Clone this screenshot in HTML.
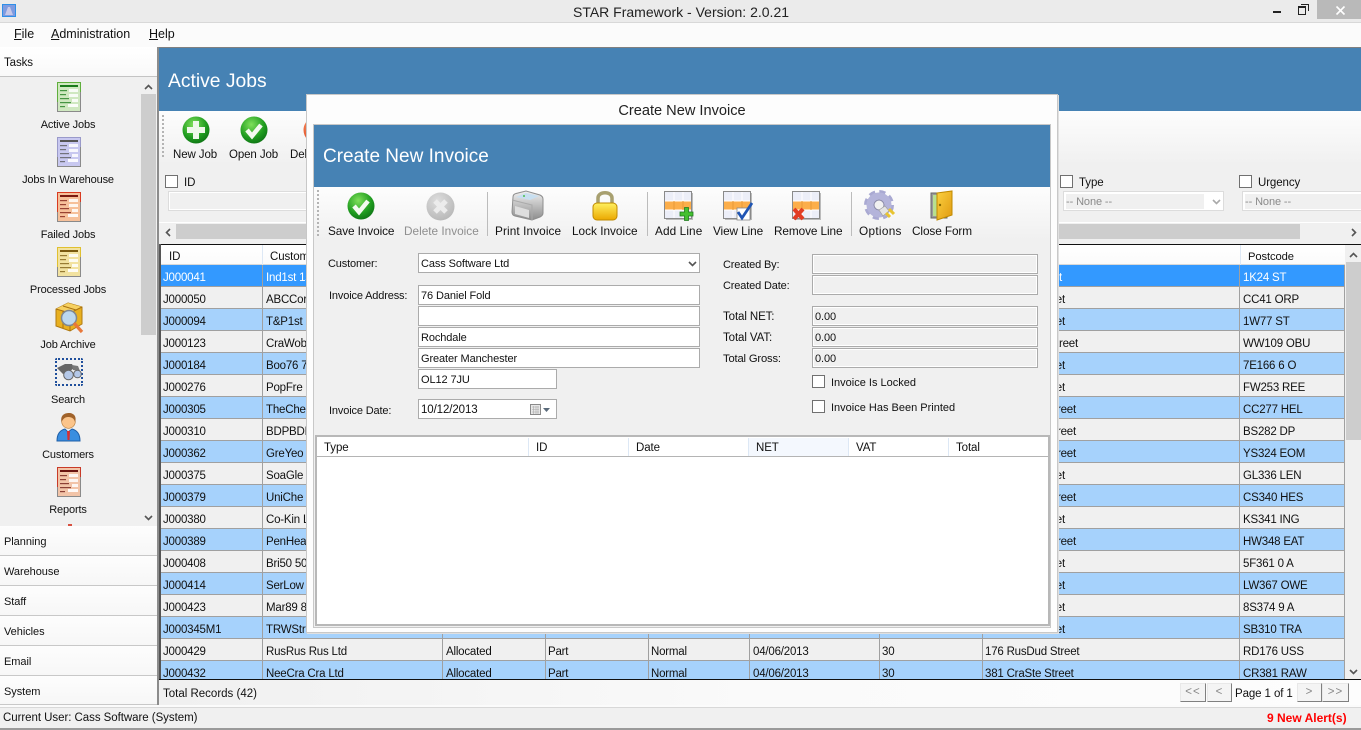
<!DOCTYPE html>
<html><head><meta charset="utf-8"><title>STAR Framework</title>
<style>
html,body{margin:0;padding:0;width:1361px;height:730px;overflow:hidden;background:#f0f0f0}
body{position:relative;font:11.5px/14px "Liberation Sans",sans-serif;color:#111;letter-spacing:-.1px}
.a{position:absolute}
.t{position:absolute;white-space:nowrap;margin-top:1px}
.c{position:absolute;white-space:nowrap;transform:translateX(-50%);margin-top:1px}
.s{font-size:11px;letter-spacing:-.15px}
.l{font-size:11px;letter-spacing:-.15px}
.tb{font-size:11.8px;letter-spacing:-.1px}
u{text-decoration:underline}
.in{position:absolute;box-sizing:border-box;border:1px solid #ababab;background:#fff;padding:3px 2px 0;height:21px;white-space:nowrap;font-size:11px;letter-spacing:-.1px}
.ro{background:#f0f0f0;box-shadow:inset 0 0 0 1px #fff}
.cb{position:absolute;box-sizing:border-box;width:13px;height:13px;border:1px solid #707070;background:#fff}
.acc{position:absolute;left:0;width:157px;height:30px;box-sizing:border-box;background:linear-gradient(#fdfdfd,#f7f7f7);border-bottom:1px solid #c8c8c8;padding:9px 0 0 4px;font-size:11px;letter-spacing:-.05px}
table{border-collapse:separate;border-spacing:0;table-layout:fixed;width:1184px;letter-spacing:-.2px}
td{height:16px;padding:5px 0 0 2px;box-sizing:content-box;border-right:1px solid #a0a0a0;border-bottom:1px solid #a0a0a0;white-space:nowrap;overflow:hidden;line-height:16px}
td:nth-child(2),td:nth-child(3),td:nth-child(6),td:nth-child(9){padding-left:3px}
tr.o td{background:#a6d2fc}
tr.e td{background:#f0f0f0}
tr.s2 td{background:#3399ff;color:#fff}
.r1,.r2,.r3,.r4{text-align:right}
td.r1{padding-right:177px}td.r2{padding-right:174px}td.r3{padding-right:163px}td.r4{padding-right:161px}
.btn{position:absolute;box-sizing:border-box;top:683px;height:19px;background:#f4f4f4;border:1px solid;border-color:#e8e8e8 #808080 #808080 #e8e8e8;text-align:center;color:#888;line-height:16px;letter-spacing:1px}
.sep{position:absolute;width:1px;background:#bcbcbc}
.grip{position:absolute;width:2px;border-left:2px dotted #b4b4b4}
svg{position:absolute;overflow:visible}
</style></head><body>
<svg width="0" height="0" style="position:absolute">
<defs>
<radialGradient id="gg" cx=".4" cy=".3" r=".8"><stop offset="0" stop-color="#7fe05a"/><stop offset=".6" stop-color="#1f9c1f"/><stop offset="1" stop-color="#0a6a12"/></radialGradient>
<radialGradient id="gr" cx=".4" cy=".3" r=".8"><stop offset="0" stop-color="#dedede"/><stop offset="1" stop-color="#b4b4b4"/></radialGradient>
<radialGradient id="rd" cx=".4" cy=".3" r=".8"><stop offset="0" stop-color="#ffa070"/><stop offset="1" stop-color="#d83a14"/></radialGradient>
<linearGradient id="go" x1="0" y1="0" x2="0" y2="1"><stop offset="0" stop-color="#fff060"/><stop offset="1" stop-color="#eba800"/></linearGradient>
<linearGradient id="dr" x1="0" y1="0" x2="1" y2="1"><stop offset="0" stop-color="#fbd040"/><stop offset="1" stop-color="#e09a10"/></linearGradient>
<linearGradient id="pr" x1="0" y1="0" x2="0" y2="1"><stop offset="0" stop-color="#f0f0f0"/><stop offset="1" stop-color="#8c8c8c"/></linearGradient>
<symbol id="doc" viewBox="0 0 24 30"><rect x=".5" y=".5" width="23" height="29" fill="var(--bg)" stroke="var(--bd)"/><path d="M23.500 10V29.500H.5V20" stroke="#8a8a8a" fill="none"/><rect x="3" y="3" width="18" height="2" fill="var(--dk)"/><rect x="12" y="7" width="9" height="3" fill="#fff" opacity=".85"/><rect x="12" y="12" width="9" height="3" fill="#fff" opacity=".85"/><rect x="15" y="17" width="6" height="3" fill="#fff" opacity=".85"/><rect x="11" y="22" width="10" height="3" fill="#fff" opacity=".9"/><rect x="3" y="8" width="7" height="1.2" fill="var(--dk)" opacity=".75"/><rect x="3" y="12" width="6" height="1.2" fill="var(--dk)" opacity=".75"/><rect x="3" y="16" width="9" height="1.2" fill="var(--dk)" opacity=".75"/><rect x="3" y="20" width="11" height="1.2" fill="var(--dk)" opacity=".75"/><rect x="3" y="24" width="5" height="1.2" fill="var(--dk)" opacity=".75"/></symbol>
<symbol id="gridic" viewBox="0 0 30 30"><rect x=".5" y=".5" width="27" height="27" fill="#eceef8" stroke="#8a8a8a"/><rect x="1" y="10" width="26" height="9" fill="#fcae4a"/><path d="M10 1V10M19 1V10M10 19V27M19 19V27M1 10H27M1 19H27" stroke="#fff" fill="none"/><path d="M10 10V19M19 10V19" stroke="#e89a38" fill="none"/><path d="M28.500 2V28.500H2" stroke="#bbb" fill="none"/></symbol>
</defs></svg>

<!-- title bar -->
<div class="a" style="left:0;top:0;width:1361px;height:23px;background:#ebebeb;border-bottom:1px solid #d8d8d8;box-sizing:border-box"></div>
<svg style="left:2px;top:4px" width="14" height="13" viewBox="0 0 14 13"><rect x=".5" y=".5" width="13" height="12" fill="#7f9be0" stroke="#2f8fe8"/><path d="M3 11L6 3H8L11 11Z" fill="#c8c8e8"/></svg>
<div class="c" style="left:681px;top:4px;font-size:14px;letter-spacing:0;color:#222">STAR Framework - Version: 2.0.21</div>
<div class="a" style="left:1273px;top:11px;width:8px;height:2px;background:#222"></div>
<div class="a" style="left:1298px;top:6px;width:6px;height:6px;border:1px solid #222;border-top-width:2px"></div>
<div class="a" style="left:1301px;top:4px;width:7px;height:6px;border:1px solid #222;border-bottom:0;border-left:0"></div>
<div class="a" style="left:1317px;top:0;width:44px;height:19px;background:#b9b9b9"></div>
<svg style="left:1336px;top:6px" width="9" height="9"><path d="M.5 .5L8.500 8.500M8.500 .5L.5 8.500" stroke="#fff" stroke-width="1.600"/></svg>

<!-- menu -->
<div class="a" style="left:0;top:23px;width:1361px;height:24px;background:#fbfbfb"></div>
<div class="t" style="left:14px;top:26px;font-size:12.5px;letter-spacing:0"><u>F</u>ile</div>
<div class="t" style="left:51px;top:26px;font-size:12.5px;letter-spacing:0"><u>A</u>dministration</div>
<div class="t" style="left:149px;top:26px;font-size:12.5px;letter-spacing:0"><u>H</u>elp</div>

<!-- sidebar -->
<div class="a" style="left:0;top:47px;width:157px;height:30px;background:linear-gradient(#fff,#f9f9f9);border-bottom:1px solid #c4c4c4;box-sizing:border-box"></div>
<div class="t" style="left:4px;top:55px">Tasks</div>
<div class="a" style="left:141px;top:77px;width:16px;height:449px;background:#f0f0f0"></div>
<div class="a" style="left:141px;top:94px;width:15px;height:241px;background:#cdcdcd"></div>
<svg style="left:144px;top:84px" width="9" height="6"><path d="M1 5L4.500 1.500L8 5" stroke="#555" stroke-width="1.600" fill="none"/></svg>
<svg style="left:144px;top:515px" width="9" height="6"><path d="M1 1L4.500 4.500L8 1" stroke="#555" stroke-width="1.600" fill="none"/></svg>

<svg style="left:57px;top:82px;--bg:#cfe8c0;--bd:#5fae3c;--dk:#1a7a1a" width="24" height="30"><use href="#doc"/></svg>
<div class="c s" style="left:68px;top:117px">Active Jobs</div>
<svg style="left:57px;top:137px;--bg:#c8c8f0;--bd:#9a9aca;--dk:#555" width="24" height="30"><use href="#doc"/></svg>
<div class="c s" style="left:68px;top:172px">Jobs In Warehouse</div>
<svg style="left:57px;top:192px;--bg:#f6c09a;--bd:#d83a20;--dk:#7a1a10" width="24" height="30"><use href="#doc"/></svg>
<div class="c s" style="left:68px;top:227px">Failed Jobs</div>
<svg style="left:57px;top:247px;--bg:#f2e2a0;--bd:#e0c030;--dk:#7a5a10" width="24" height="30"><use href="#doc"/></svg>
<div class="c s" style="left:68px;top:282px">Processed Jobs</div>
<svg style="left:54px;top:302px" width="31" height="31" viewBox="0 0 31 31"><path d="M14 1L28 5V22L16 29L2 24V7Z" fill="#e8b020" stroke="#b07a10"/><path d="M2 7L14 1L28 5L16 11Z" fill="#f6d060"/><path d="M2 7L16 11L28 5M16 11V29M9 4L22 8M9 9V26" stroke="#a87010" fill="none"/><circle cx="15" cy="16" r="7.500" fill="#bcd8ee" stroke="#808890" stroke-width="1.500"/><path d="M20 21L28 30" stroke="#e8783a" stroke-width="3.200"/></svg>
<div class="c s" style="left:68px;top:337px">Job Archive</div>
<div class="a" style="left:55px;top:358px;width:28px;height:28px;box-sizing:border-box;border:2px dotted #1f4f9c;border-radius:2px"></div>
<svg style="left:56px;top:362px" width="26" height="20" viewBox="0 0 26 20"><path d="M1 6L9 2H16L18 6L13 10L7 12Z" fill="#666"/><path d="M16 3L22 4L24 9L17 8Z" fill="#777"/><circle cx="12.500" cy="13" r="4.800" fill="#b4c8e8" stroke="#666"/><circle cx="21.500" cy="12" r="3.800" fill="#b4c8e8" stroke="#666"/></svg>
<div class="c s" style="left:68px;top:392px">Search</div>
<svg style="left:56px;top:412px" width="25" height="30" viewBox="0 0 25 30"><path d="M1 29C1 21 5 18 9 17L12 20L16 17C20 18 24 21 24 29Z" fill="#3a8ee0" stroke="#1f5fa8"/><path d="M11 19H14L13.500 28H11.500Z" fill="#d83030"/><circle cx="12.500" cy="9.500" r="6.800" fill="#fbc48a" stroke="#b87830" stroke-width=".6"/><path d="M5.500 10C4 3 9 1 13 1C18 1 21 5 19 10C18 6 15 5 12 5C9 5 7 7 5.500 10Z" fill="#a0622a"/></svg>
<div class="c s" style="left:68px;top:447px">Customers</div>
<svg style="left:57px;top:467px;--bg:#f2c4a8;--bd:#c83a28;--dk:#6a1410" width="24" height="30"><use href="#doc"/></svg>
<div class="c s" style="left:68px;top:502px">Reports</div>
<div class="a" style="left:68px;top:524px;width:4px;height:2px;background:#d85040"></div>

<div class="acc" style="top:526px">Planning</div>
<div class="acc" style="top:556px">Warehouse</div>
<div class="acc" style="top:586px">Staff</div>
<div class="acc" style="top:616px">Vehicles</div>
<div class="acc" style="top:646px">Email</div>
<div class="acc" style="top:676px;height:29px">System</div>

<!-- splitter -->
<div class="a" style="left:157px;top:47px;width:1204px;height:1px;background:#808080"></div>
<div class="a" style="left:157px;top:47px;width:2px;height:659px;background:#8c8c8c"></div>

<!-- main -->
<div class="a" style="left:159px;top:48px;width:1202px;height:63px;background:#4682b4"></div>
<div class="t" style="left:168px;top:70px;font-size:19.3px;line-height:24px;color:#fff;letter-spacing:0;margin:0">Active Jobs</div>
<div class="a" style="left:159px;top:111px;width:1202px;height:54px;background:linear-gradient(#fdfdfd,#f0f0f0)"></div>
<div class="grip" style="left:162px;top:115px;height:42px"></div>
<svg style="left:182px;top:116px" width="28" height="28"><circle cx="14" cy="14" r="13.500" fill="url(#gg)"/><path d="M11 5H17V11H23V17H17V23H11V17H5V11H11Z" fill="#eef8ea"/></svg>
<svg style="left:240px;top:116px" width="28" height="28"><circle cx="14" cy="14" r="13.500" fill="url(#gg)"/><path d="M7 14L12 20L21 9" stroke="#f4faf0" stroke-width="4.500" fill="none"/></svg>
<svg style="left:303px;top:116px" width="28" height="28"><circle cx="14" cy="14" r="13.500" fill="url(#rd)"/></svg>
<div class="t" style="left:173px;top:147px">New Job</div>
<div class="t" style="left:229px;top:147px">Open Job</div>
<div class="t" style="left:290px;top:147px">Delete Job</div>

<div class="cb" style="left:165px;top:175px"></div>
<div class="t" style="left:184px;top:175px">ID</div>
<div class="a" style="left:168px;top:191px;width:200px;height:20px;box-sizing:border-box;border:1px solid #dcdcdc;background:#f0f0f0;box-shadow:inset 0 0 0 1px #fff"></div>
<div class="cb" style="left:1060px;top:175px"></div>
<div class="t" style="left:1079px;top:175px">Type</div>
<div class="a" style="left:1063px;top:191px;width:161px;height:20px;box-sizing:border-box;border:1px solid #dcdcdc;background:#fff"></div>
<div class="a" style="left:1066px;top:194px;width:138px;height:15px;background:#f0f0f0"></div>
<div class="t" style="left:1066px;top:194px;color:#8a8a8a;font-size:11px">-- None --</div>
<svg style="left:1212px;top:199px" width="9" height="6"><path d="M1 1L4.500 4.500L8 1" stroke="#aaa" stroke-width="1.600" fill="none"/></svg>
<div class="cb" style="left:1239px;top:175px"></div>
<div class="t" style="left:1258px;top:175px">Urgency</div>
<div class="a" style="left:1242px;top:191px;width:119px;height:20px;box-sizing:border-box;border:1px solid #dcdcdc;border-right:0;background:#fff"></div>
<div class="a" style="left:1245px;top:194px;width:116px;height:15px;background:#f0f0f0"></div>
<div class="t" style="left:1245px;top:194px;color:#8a8a8a;font-size:11px">-- None --</div>

<!-- h scroll -->
<div class="a" style="left:159px;top:222px;width:1202px;height:1px;background:#fff"></div>
<div class="a" style="left:176px;top:224px;width:1124px;height:15px;background:#cdcdcd"></div>
<svg style="left:165px;top:228px" width="6" height="9"><path d="M5 1L1.500 4.500L5 8" stroke="#555" stroke-width="1.600" fill="none"/></svg>
<svg style="left:1351px;top:228px" width="6" height="9"><path d="M1 1L4.500 4.500L1 8" stroke="#555" stroke-width="1.600" fill="none"/></svg>

<!-- grid -->
<div class="a" style="left:159px;top:244px;width:1202px;height:1px;background:#111"></div>
<div class="a" style="left:159px;top:244px;width:2px;height:436px;background:#555"></div>
<div class="a" style="left:161px;top:245px;width:1184px;height:20px;background:linear-gradient(#fff,#fbfbfb);border-bottom:1px solid #d8d8d8;box-sizing:border-box"></div>
<div class="a" style="left:262px;top:245px;width:1px;height:20px;background:#dde8f5"></div>
<div class="a" style="left:1240px;top:245px;width:1px;height:20px;background:#dde8f5"></div>
<div class="t" style="left:169px;top:249px">ID</div>
<div class="t" style="left:270px;top:249px">Customer</div>
<div class="t" style="left:1248px;top:249px;font-size:11.2px">Postcode</div>

<div class="a" style="left:161px;top:265px;width:1184px;height:415px;overflow:hidden">
<table><colgroup><col style="width:102px"><col style="width:180px"><col style="width:103px"><col style="width:103px"><col style="width:101px"><col style="width:130px"><col style="width:103px"><col style="width:257px"><col style="width:105px"></colgroup>
<tr class="s2"><td>J000041</td><td>Ind1st 1st Ltd</td><td></td><td></td><td></td><td></td><td></td><td class="r1">41 Street</td><td>1K24 ST</td></tr>
<tr class="e"><td>J000050</td><td>ABCCor Ltd</td><td></td><td></td><td></td><td></td><td></td><td class="r2">Street</td><td>CC41 ORP</td></tr>
<tr class="o"><td>J000094</td><td>T&amp;P1st 1st</td><td></td><td></td><td></td><td></td><td></td><td class="r2">Street</td><td>1W77 ST</td></tr>
<tr class="e"><td>J000123</td><td>CraWob Ltd</td><td></td><td></td><td></td><td></td><td></td><td class="r4">Street</td><td>WW109 OBU</td></tr>
<tr class="o"><td>J000184</td><td>Boo76 76</td><td></td><td></td><td></td><td></td><td></td><td class="r2">Street</td><td>7E166 6 O</td></tr>
<tr class="e"><td>J000276</td><td>PopFre Ltd</td><td></td><td></td><td></td><td></td><td></td><td class="r2">Street</td><td>FW253 REE</td></tr>
<tr class="o"><td>J000305</td><td>TheChe Ltd</td><td></td><td></td><td></td><td></td><td></td><td class="r3">Street</td><td>CC277 HEL</td></tr>
<tr class="e"><td>J000310</td><td>BDPBDP Ltd</td><td></td><td></td><td></td><td></td><td></td><td class="r3">Street</td><td>BS282 DP</td></tr>
<tr class="o"><td>J000362</td><td>GreYeo Ltd</td><td></td><td></td><td></td><td></td><td></td><td class="r3">Street</td><td>YS324 EOM</td></tr>
<tr class="e"><td>J000375</td><td>SoaGle Ltd</td><td></td><td></td><td></td><td></td><td></td><td class="r2">Street</td><td>GL336 LEN</td></tr>
<tr class="o"><td>J000379</td><td>UniChe Ltd</td><td></td><td></td><td></td><td></td><td></td><td class="r3">Street</td><td>CS340 HES</td></tr>
<tr class="e"><td>J000380</td><td>Co-Kin Ltd</td><td></td><td></td><td></td><td></td><td></td><td class="r2">Street</td><td>KS341 ING</td></tr>
<tr class="o"><td>J000389</td><td>PenHea Ltd</td><td></td><td></td><td></td><td></td><td></td><td class="r3">Street</td><td>HW348 EAT</td></tr>
<tr class="e"><td>J000408</td><td>Bri50 50</td><td></td><td></td><td></td><td></td><td></td><td class="r2">Street</td><td>5F361 0 A</td></tr>
<tr class="o"><td>J000414</td><td>SerLow Ltd</td><td></td><td></td><td></td><td></td><td></td><td class="r2">Street</td><td>LW367 OWE</td></tr>
<tr class="e"><td>J000423</td><td>Mar89 89</td><td></td><td></td><td></td><td></td><td></td><td class="r2">Street</td><td>8S374 9 A</td></tr>
<tr class="o"><td>J000345M1</td><td>TRWStr Ltd</td><td></td><td></td><td></td><td></td><td></td><td class="r2">Street</td><td>SB310 TRA</td></tr>
<tr class="e"><td>J000429</td><td>RusRus Rus Ltd</td><td>Allocated</td><td>Part</td><td>Normal</td><td>04/06/2013</td><td>30</td><td>176 RusDud Street</td><td>RD176 USS</td></tr>
<tr class="o"><td>J000432</td><td>NeeCra Cra Ltd</td><td>Allocated</td><td>Part</td><td>Normal</td><td>04/06/2013</td><td>30</td><td>381 CraSte Street</td><td>CR381 RAW</td></tr>
</table></div>
<div class="a" style="left:159px;top:679px;width:1202px;height:1px;background:#111"></div>

<!-- v scroll -->
<div class="a" style="left:1345px;top:245px;width:16px;height:434px;background:#f0f0f0"></div>
<div class="a" style="left:1346px;top:262px;width:15px;height:178px;background:#cdcdcd"></div>
<svg style="left:1349px;top:252px" width="9" height="6"><path d="M1 5L4.500 1.500L8 5" stroke="#555" stroke-width="1.600" fill="none"/></svg>
<svg style="left:1349px;top:669px" width="9" height="6"><path d="M1 1L4.500 4.500L8 1" stroke="#555" stroke-width="1.600" fill="none"/></svg>

<!-- footer -->
<div class="a" style="left:159px;top:680px;width:1202px;height:25px;background:linear-gradient(90deg,#f0f0f0,#fafafa 50%,#fdfdfd)"></div>
<div class="t" style="left:163px;top:686px;letter-spacing:0">Total Records (42)</div>
<div class="btn" style="left:1180px;width:26px">&lt;&lt;</div>
<div class="btn" style="left:1207px;width:25px">&lt;</div>
<div class="t" style="left:1235px;top:686px">Page 1 of 1</div>
<div class="btn" style="left:1297px;width:25px">&gt;</div>
<div class="btn" style="left:1322px;width:27px">&gt;&gt;</div>
<div class="a" style="left:0;top:705px;width:1361px;height:2px;background:#fbfbfb;border-bottom:1px solid #d8d8d8"></div>
<div class="a" style="left:0;top:708px;width:1361px;height:20px;background:#f0f0f0"></div>
<div class="t" style="left:3px;top:710px;letter-spacing:-.05px">Current User: Cass Software (System)</div>
<div class="t" style="left:1267px;top:710px;color:#f00;font-weight:bold;font-size:12px;letter-spacing:0">9 New Alert(s)</div>
<div class="a" style="left:0;top:728px;width:1361px;height:2px;background:#9a9a9a"></div>

<!-- modal -->
<div class="a" style="left:306px;top:94px;width:752px;height:539px;box-sizing:border-box;background:#fdfdfd;border:1px solid #c8c8c8;box-shadow:1px 1px 0 #e0e0e0"></div>
<div class="c" style="left:682px;top:104px;font-size:14.6px;letter-spacing:0;color:#222;margin:0">Create New Invoice</div>
<div class="a" style="left:313px;top:124px;width:738px;height:504px;box-sizing:border-box;border:1px solid #c8c8c8;background:#f0f0f0"></div>
<div class="a" style="left:314px;top:125px;width:736px;height:62px;background:#4682b4"></div>
<div class="t" style="left:323px;top:145px;font-size:19px;line-height:24px;color:#fff;letter-spacing:0;margin:0">Create New Invoice</div>
<div class="a" style="left:314px;top:187px;width:736px;height:53px;background:linear-gradient(#fdfdfd,#f0f0f0)"></div>
<div class="grip" style="left:317px;top:190px;height:46px"></div>

<svg style="left:347px;top:192px" width="28" height="28"><circle cx="14" cy="14" r="13.500" fill="url(#gg)"/><path d="M7 14L12 20L21 9" stroke="#f4faf0" stroke-width="4.500" fill="none"/></svg>
<svg style="left:426px;top:192px" width="29" height="29"><circle cx="14.500" cy="14.500" r="14" fill="url(#gr)"/><path d="M9 9L20 20M20 9L9 20" stroke="#ececec" stroke-width="5"/></svg>
<svg style="left:511px;top:190px" width="33" height="30" viewBox="0 0 33 30"><path d="M2 7C2 5 3 4 5 3.500L15 1L29 5C31 6 32 7 32 9V23C32 25 31 26 29 27L21 30L4 26C2 25.500 1 24 1 22Z" fill="url(#pr)" stroke="#8e8e8e"/><path d="M5 7L15 3L28 6L19 10Z" fill="#c8dff0"/><path d="M1 10L21 15V30" stroke="#aaa" fill="none"/><path d="M4 16L18 20V28L4 24Z" fill="#dedede"/><circle cx="13" cy="6" r="1" fill="#4cc04c"/></svg>
<svg style="left:592px;top:190px" width="26" height="31" viewBox="0 0 26 31"><path d="M6 14V8C6 1 20 1 20 8V14" stroke="#a8a070" stroke-width="3.500" fill="none"/><rect x="1" y="13" width="24" height="17" rx="4" fill="url(#go)" stroke="#c08a00"/></svg>

<svg style="left:664px;top:191px" width="30" height="30"><use href="#gridic"/><path d="M20.500 16.500H24.500V21H29V25H24.500V29.500H20.500V25H16V21H20.500Z" fill="#44c030" stroke="#1f7a1f" stroke-width=".8"/></svg>
<svg style="left:723px;top:191px" width="30" height="30"><use href="#gridic"/><rect x="14" y="17" width="13" height="12" fill="#fff" stroke="#888" stroke-width=".8"/><path d="M15 21L19 27L29 12" stroke="#1f55b4" stroke-width="2.800" fill="none"/></svg>
<svg style="left:792px;top:191px" width="30" height="30"><use href="#gridic"/><path d="M2 18L11 28M11 18L2 28" stroke="#e23c24" stroke-width="4"/></svg>
<svg style="left:864px;top:190px" width="32" height="31" viewBox="0 0 32 31"><circle cx="15" cy="15" r="13" fill="none" stroke="#a9a9d2" stroke-width="4" stroke-dasharray="6 4.200"/><circle cx="15" cy="15" r="9" fill="none" stroke="#b4b4da" stroke-width="7"/><circle cx="15" cy="15" r="5" fill="#f0f0f0" stroke="#8888a8"/><path d="M15 20L21 16L25 21L19 26Z" fill="#e4e4e4" stroke="#999" stroke-width=".6"/><path d="M22 23L26 27M25 19L30 24" stroke="#e8c430" stroke-width="3"/></svg>
<svg style="left:930px;top:190px" width="23" height="31" viewBox="0 0 23 31"><rect x="1" y="3" width="16" height="25" fill="#9a9a9a" stroke="#666"/><rect x="3" y="5" width="5" height="21" fill="#b8e090"/><path d="M7 3L22 1V25L7 30Z" fill="url(#dr)" stroke="#c08a00"/><circle cx="10" cy="15" r="1.200" fill="#8a6a00"/></svg>

<div class="t tb" style="left:328px;top:223px;letter-spacing:-.1px">Save Invoice</div>
<div class="t tb" style="left:404px;top:223px;color:#8f8f8f;letter-spacing:0">Delete Invoice</div>
<div class="t tb" style="left:495px;top:223px;letter-spacing:.1px">Print Invoice</div>
<div class="t tb" style="left:572px;top:223px;letter-spacing:0">Lock Invoice</div>
<div class="t tb" style="left:655px;top:223px;letter-spacing:.1px">Add Line</div>
<div class="t tb" style="left:713px;top:223px">View Line</div>
<div class="t tb" style="left:774px;top:223px">Remove Line</div>
<div class="t tb" style="left:859px;top:223px;letter-spacing:.3px">Options</div>
<div class="t tb" style="left:912px;top:223px">Close Form</div>
<div class="sep" style="left:487px;top:192px;height:44px"></div>
<div class="sep" style="left:647px;top:192px;height:44px"></div>
<div class="sep" style="left:851px;top:192px;height:44px"></div>

<div class="t l" style="left:328px;top:256px">Customer:</div>
<div class="t l" style="left:329px;top:288px">Invoice Address:</div>
<div class="t l" style="left:329px;top:403px">Invoice Date:</div>
<div class="in" style="left:418px;top:253px;width:282px;height:20px">Cass Software Ltd</div>
<svg style="left:688px;top:261px" width="9" height="6"><path d="M1 1L4.500 4.500L8 1" stroke="#555" stroke-width="1.600" fill="none"/></svg>
<div class="in" style="left:418px;top:285px;width:282px;height:20px">76 Daniel Fold</div>
<div class="in" style="left:418px;top:306px;width:282px;height:20px"></div>
<div class="in" style="left:418px;top:327px;width:282px;height:20px">Rochdale</div>
<div class="in" style="left:418px;top:348px;width:282px;height:20px">Greater Manchester</div>
<div class="in" style="left:418px;top:369px;width:139px;height:20px">OL12 7JU</div>
<div class="in" style="left:418px;top:399px;width:139px;height:20px;font-size:11.5px">10/12/2013</div>
<svg style="left:530px;top:403px" width="24" height="12"><rect x=".5" y="1.500" width="10" height="10" fill="#e8e8e8" stroke="#8a8a8a"/><path d="M2 4H9M2 6.500H9M2 9H9M3.500 3V11M6 3V11M8 3V11" stroke="#aaa" stroke-width=".6"/><path d="M13 5H20L16.500 9Z" fill="#5a6a7a"/></svg>

<div class="t l" style="left:723px;top:257px">Created By:</div>
<div class="t l" style="left:723px;top:278px">Created Date:</div>
<div class="t" style="left:723px;top:309px">Total NET:</div>
<div class="t" style="left:723px;top:330px">Total VAT:</div>
<div class="t l" style="left:723px;top:351px;font-size:11.2px">Total Gross:</div>
<div class="in ro" style="left:812px;top:254px;width:226px;height:20px"></div>
<div class="in ro" style="left:812px;top:275px;width:226px;height:20px"></div>
<div class="in ro" style="left:812px;top:306px;width:226px;height:20px">0.00</div>
<div class="in ro" style="left:812px;top:327px;width:226px;height:20px">0.00</div>
<div class="in ro" style="left:812px;top:348px;width:226px;height:20px">0.00</div>
<div class="cb" style="left:812px;top:375px"></div>
<div class="t l" style="left:831px;top:375px;letter-spacing:0">Invoice Is Locked</div>
<div class="cb" style="left:812px;top:400px"></div>
<div class="t l" style="left:831px;top:400px;letter-spacing:0">Invoice Has Been Printed</div>

<div class="a" style="left:315px;top:435px;width:735px;height:191px;box-sizing:border-box;border:2px solid #b8b8b8;background:#fff"></div>
<div class="a" style="left:317px;top:437px;width:731px;height:20px;box-sizing:border-box;background:#fff;border-bottom:1px solid #b4b4b4"></div>
<div class="a" style="left:749px;top:438px;width:100px;height:18px;background:#f4f8fe"></div>
<div class="a" style="left:528px;top:438px;width:1px;height:18px;background:#dde8f5"></div>
<div class="a" style="left:628px;top:438px;width:1px;height:18px;background:#dde8f5"></div>
<div class="a" style="left:748px;top:438px;width:1px;height:18px;background:#dde8f5"></div>
<div class="a" style="left:848px;top:438px;width:1px;height:18px;background:#dde8f5"></div>
<div class="a" style="left:948px;top:438px;width:1px;height:18px;background:#dde8f5"></div>
<div class="t" style="left:324px;top:440px">Type</div>
<div class="t" style="left:536px;top:440px">ID</div>
<div class="t" style="left:636px;top:440px">Date</div>
<div class="t" style="left:756px;top:440px">NET</div>
<div class="t" style="left:856px;top:440px">VAT</div>
<div class="t" style="left:956px;top:440px">Total</div>
</body></html>
